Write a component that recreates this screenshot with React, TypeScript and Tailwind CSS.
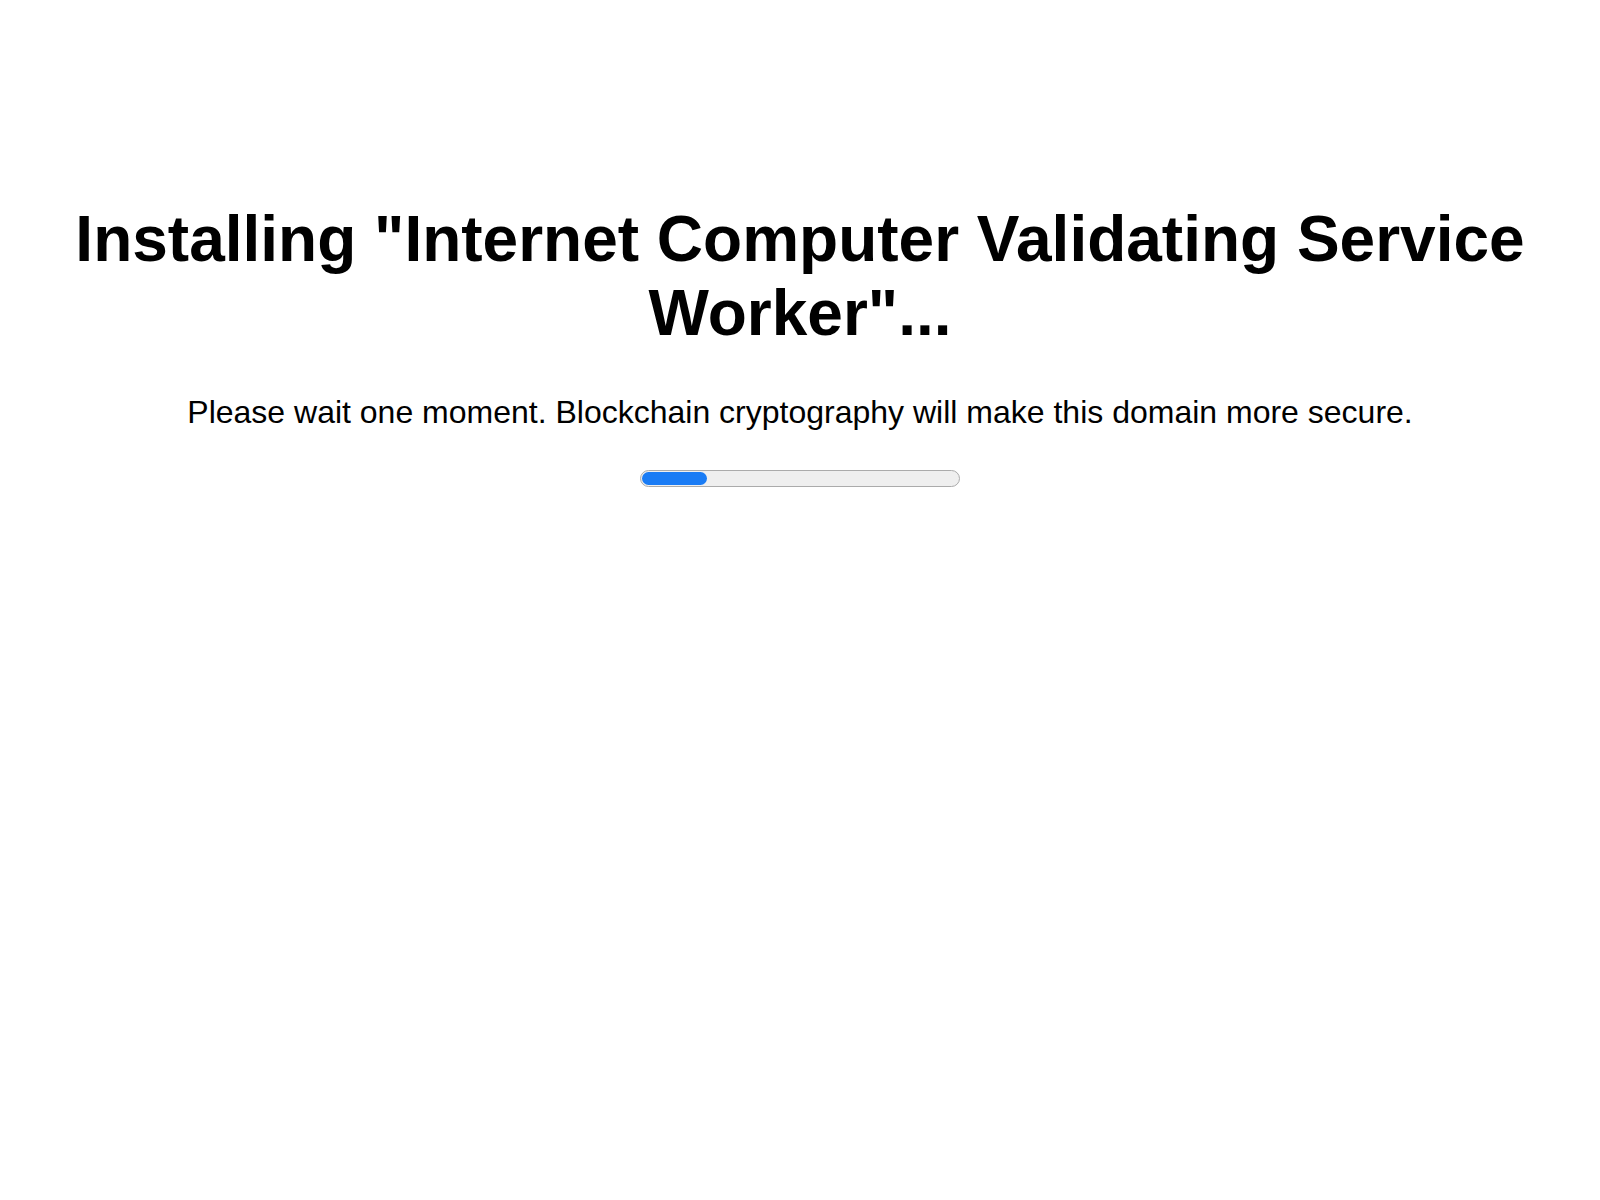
export default function App() {
  return (
    <div className="min-h-[1200px] w-full bg-white text-black" style={{ fontFamily: '"Liberation Sans", Arial, sans-serif' }}>
      <div className="flex flex-col items-center px-[40px] pt-[203px]">
        <h1 className="text-center text-[64px] font-bold leading-[73.5px]">
          Installing "Internet Computer Validating Service Worker"...
        </h1>
        <p className="mt-[44px] text-center text-[32px] leading-[37px]">
          Please wait one moment. Blockchain cryptography will make this domain more secure.
        </p>
        <div className="mt-[39px] h-[17px] w-[320px] rounded-full border border-[#ababab] bg-[#efefef] p-[1px]">
          <div className="h-full w-[65px] rounded-full bg-[#1a7cf5]" />
        </div>
      </div>
    </div>
  );
}
